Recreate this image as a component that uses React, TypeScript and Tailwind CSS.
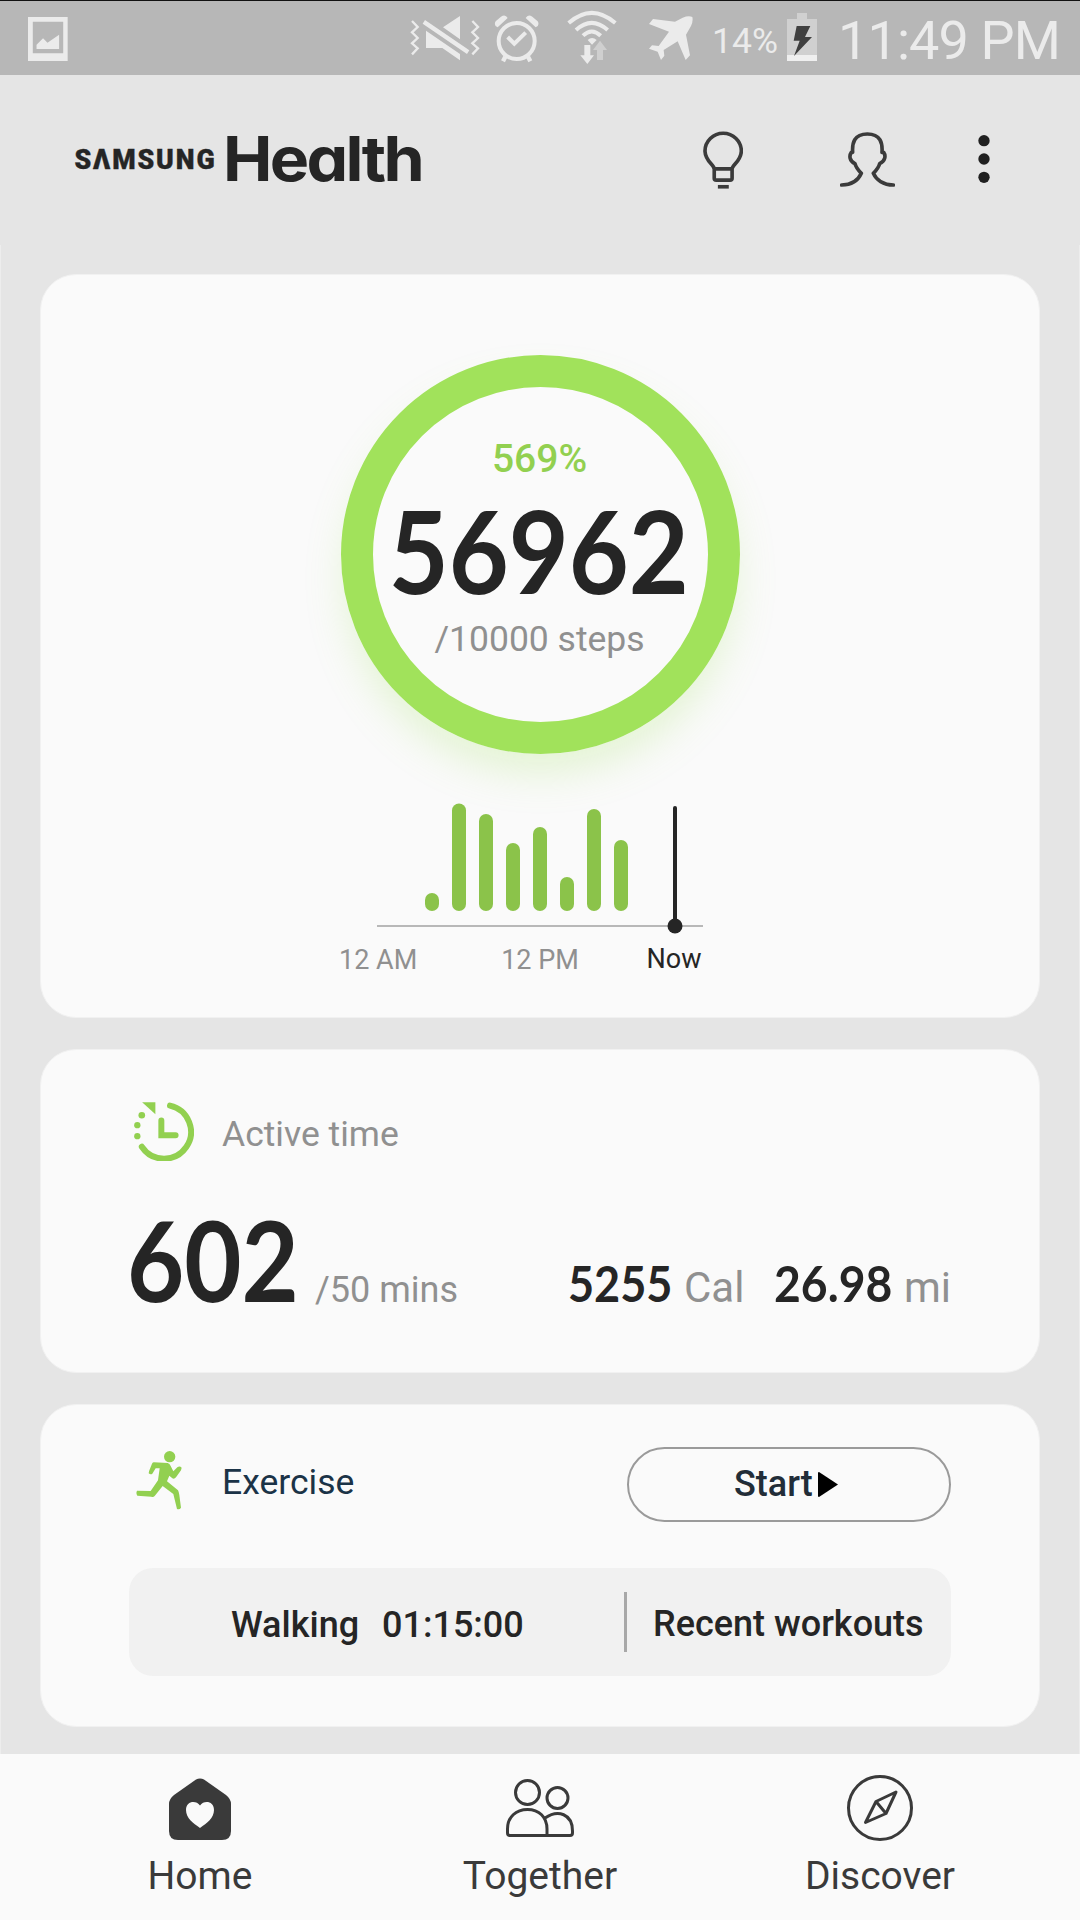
import React from "react";

interface Bar {
  x: number;
  height: number;
}

const bars: Bar[] = [
  { x: 85, height: 18 },
  { x: 112, height: 107.5 },
  { x: 139, height: 97 },
  { x: 166, height: 68 },
  { x: 193, height: 84 },
  { x: 220, height: 34 },
  { x: 247, height: 102 },
  { x: 274, height: 71 },
];

function StatusBar() {
  return (
    <div className="flex h-[75px] border-t border-[#111] bg-[#b7b7b7] text-[#ebebeb]">
      <svg className="-mt-px ml-[28px] h-[75px] w-[40px] shrink-0" viewBox="81 0 117 225" preserveAspectRatio="none" fill="currentColor">
        <path fillRule="evenodd" d="M81 51H197V183H81ZM95 65V160H184V65Z" />
        <path d="M106 134L125 115L138 128L172 104V147H106Z" />
      </svg>
      <svg className="-mt-px ml-[342px] h-[75px] w-[70px] shrink-0" viewBox="30 0 210 225" fill="currentColor">
        <path
          d="M36 63L53 81L36 97L53 114L36 130L53 145L36 163M217 63L234 81L217 97L234 114L217 130L234 145L217 163"
          fill="none"
          stroke="currentColor"
          strokeWidth="7"
        />
        <path d="M180 48V118L129 82ZM78 92L180 162V181L127 144H78ZM75 60L208 151L201 162L68 71Z" />
      </svg>
      <svg className="-mt-px ml-[14px] h-[75px] w-[46px] shrink-0" viewBox="283 0 138 225" fill="none" stroke="currentColor">
        <circle cx="351" cy="123" r="54" strokeWidth="12" />
        <path d="M324 111L344 131L378 98" strokeWidth="12" />
        <path d="M317 170L310 184M385 170L392 184" strokeWidth="13" />
        <path
          d="M294 82Q281 76 288 64L304 50Q317 41 324 54ZM408 82Q421 76 414 64L398 50Q385 41 378 54Z"
          fill="currentColor"
          stroke="none"
        />
      </svg>
      <svg className="-mt-px ml-[27px] h-[75px] w-[50px] shrink-0" viewBox="501 0 150 225" fill="none" stroke="currentColor">
        <path d="M506 69Q575 8 646 69M528 90Q575 47 623 90M549 107Q575 82 602 107" strokeWidth="12" />
        <path d="M563 120Q576 108 590 120L576 134Z" fill="currentColor" stroke="none" />
        <path d="M553 135H571V166H582L562 192L541 166H553Z" fill="currentColor" stroke="none" />
        <path d="M600 122L621 150H609V180H591V150H579Z" fill="#cfcfcf" stroke="none" />
      </svg>
      <svg className="-mt-px ml-[31px] h-[75px] w-[45px] shrink-0" viewBox="744 0 135 225" fill="currentColor">
        <path d="M747 72L759 57L825 65L848 53Q866 46 877 51Q880 63 873 78L858 104L870 166L857 180L833 124L791 150L793 167L783 180L773 155L747 146L756 136L776 138L807 95Z" />
      </svg>
      <span className="ml-[19px] mt-[19px] w-[69px] text-[35.5px] leading-[42px]">14%</span>
      <svg className="-mt-px ml-[6px] h-[75px] w-[30px] shrink-0" viewBox="201 0 90 225">
        <path d="M231 39H261V57H291V166H201V57H231Z" fill="#d0d0d0" />
        <path d="M201 165H291V183H201Z" fill="#efefef" />
        <path d="M230 78H271L255 111H276L222 168L239 122H221Z" fill="#404040" />
      </svg>
      <span className="ml-[21px] mt-[8px] whitespace-nowrap text-[54px] leading-[64px] tracking-[-0.9px]">11:49 PM</span>
    </div>
  );
}

function Header() {
  return (
    <div className="flex h-[170px] pt-[35px]">
      <svg className="ml-[50px] h-[100px] w-[400px] shrink-0" viewBox="0 0 400 100" fill="#252525">
        <text
          x="24.5"
          y="59"
          textLength="142"
          lengthAdjust="spacingAndGlyphs"
          stroke="#252525"
          strokeWidth="0.4"
          className="font-['Roboto'] text-[28.5px] font-black tracking-[2px]"
        >
          SΛMSUNG
        </text>
        <text
          x="173"
          y="71"
          textLength="199"
          lengthAdjust="spacingAndGlyphs"
          className="font-['Inter'] text-[62px] font-bold tracking-[-2.5px] [font-feature-settings:'cv11']"
        >
          Health
        </text>
      </svg>
      <svg className="ml-[253px] h-[100px] w-[40px] shrink-0" viewBox="69 0 121 300" fill="none" stroke="#3b3b3b" strokeWidth="11">
        <path d="M103 175C98 162 76 151 75 123A55 54 0 0 1 185 123C184 151 162 162 157 175" />
        <path d="M103 177H157V205Q157 211 151 211H109Q103 211 103 205Z" />
        <path d="M114 231H147" />
      </svg>
      <svg
        className="ml-[97px] h-[100px] w-[55px] shrink-0"
        viewBox="480 0 165 300"
        fill="none"
        stroke="#3b3b3b"
        strokeWidth="11"
        strokeLinecap="round"
        strokeLinejoin="round"
      >
        <path d="M485 225C515 225 535 210 544 190C535 181 528 174 525 161C508 153 507 137 514 127L518 127C516 100 522 72 562 72C602 72 608 100 606 127L611 127C618 137 616 153 599 161C596 174 589 181 580 190C589 210 610 225 640 225" />
      </svg>
      <svg className="ml-[83px] h-[100px] w-[12px] shrink-0" viewBox="893 0 36 300" fill="#202020">
        <circle cx="911" cy="92" r="17" />
        <circle cx="911" cy="147" r="17" />
        <circle cx="911" cy="202" r="17" />
      </svg>
    </div>
  );
}

function StepsCard() {
  return (
    <div className="flex h-[744px] flex-col items-center rounded-[36px] border border-[#f1f1f1] bg-[#fafafa] pt-[80px]">
      <div className="flex h-[399px] w-[399px] shrink-0 flex-col items-center rounded-full border-[32px] border-[#a1e25b] pr-px pt-[52px] shadow-[0_24px_40px_-6px_rgba(161,226,91,0.25)]">
        <span className="text-[39px] font-medium leading-[40px] text-[#92d050]">569%</span>
        <span className="mt-[10px] -ml-[2px] scale-x-[0.9] whitespace-nowrap font-['Lato'] text-[115px] font-bold leading-[120px] text-[#252525]">
          56962
        </span>
        <span className="mt-[9px] whitespace-nowrap text-[35.5px] leading-[42px] text-[#909090]">/10000 steps</span>
      </div>
      <svg className="mt-[46px] h-[136px] w-[400px] shrink-0" viewBox="0 0 400 136">
        {bars.map((b) => (
          <rect key={b.x} x={b.x} y={111 - b.height} width="14" height={b.height} rx="7" fill="#8bc34a" />
        ))}
        <rect x="37" y="125" width="326" height="2" fill="#b8b8b8" />
        <rect x="333" y="6" width="4" height="120" rx="2" fill="#252525" />
        <circle cx="335" cy="126" r="7.5" fill="#252525" />
      </svg>
      <div className="mt-[8px] flex w-[400px] whitespace-nowrap text-center text-[27px] leading-[32px] text-[#909090]">
        <span className="-ml-px w-[77px]">12 AM</span>
        <span className="ml-[84px] w-[80px]">12 PM</span>
        <span className="-mt-px ml-[64px] w-[60px] text-[#252525]">Now</span>
      </div>
    </div>
  );
}

function ActiveTimeCard() {
  return (
    <div className="h-[324px] rounded-[36px] border border-[#f1f1f1] bg-[#fafafa] pt-[52px] text-[36px] text-[#909090]">
      <div className="flex h-[60px]">
        <svg className="ml-[93px] h-[59px] w-[60px]" viewBox="311 185 180 178" fill="#92d050">
          <path d="M335 186H375V222Z" />
          <circle cx="334" cy="225" r="10" />
          <circle cx="320.5" cy="255" r="9.5" />
          <circle cx="320.5" cy="288" r="9.5" />
          <g fill="none" stroke="#92d050" strokeWidth="18" strokeLinecap="round">
            <path d="M419 196A81 81 0 1 1 334 320" />
            <path d="M393 241V285H436" />
          </g>
        </svg>
        <span className="ml-[28px] mt-[11px] text-[35.5px] leading-[42px]">Active time</span>
      </div>
      <div className="mt-[41px] flex items-baseline whitespace-nowrap leading-[42px]">
        <span className="ml-[86px] w-[188px] origin-left scale-x-[0.89] font-['Lato'] text-[111px] font-bold leading-[112px] text-[#252525]">
          602
        </span>
        <span className="w-[253px]">/50 mins</span>
        <span className="w-[116px] origin-left scale-x-[0.9] font-['Lato'] text-[50px] font-bold text-[#252525]">5255</span>
        <span className="w-[90px] text-[42px]">Cal</span>
        <span className="w-[130px] origin-left scale-x-[0.925] font-['Lato'] text-[50px] font-bold text-[#252525]">26.98</span>
        <span className="text-[42px]">mi</span>
      </div>
    </div>
  );
}

function ExerciseCard() {
  return (
    <div className="h-[323px] rounded-[36px] border border-[#f1f1f1] bg-[#fafafa] pt-[42px] text-[36px] leading-[42px]">
      <div className="flex h-[75px]">
        <svg className="ml-[95px] mt-[4px] h-[59px] w-[46px]" viewBox="317 152 138 177" fill="#92d050">
          <circle cx="418" cy="169" r="17" />
          <path d="M371 186L412 188Q418 190 421 197L429 213L441 201Q448 196 454 202L452 210L437 231Q432 237 426 234L417 226L410 243L443 270Q446 276 447 284L452 322Q448 329 440 326L429 281L397 257L373 287Q369 291 363 289L321 286Q316 279 320 271L361 272L383 240L388 204L376 204L366 220Q361 224 355 219Q355 213 359 205L365 190Q367 186 371 186Z" />
        </svg>
        <span className="ml-[40px] mt-[14px] w-[405px] text-[35.5px] text-[#1b3347]">Exercise</span>
        <button className="flex h-[75px] w-[324px] rounded-full border-2 border-[#9a9a9a] pl-[105px] pt-[14px] font-medium text-[#222d38]">
          Start
          <svg className="ml-[5px] mt-[9px] h-[25px] w-[20px]" viewBox="0 0 20 25">
            <path d="M0 1Q0 0 1 0L20 12.5L1 25Q0 25 0 24Z" fill="#000" />
          </svg>
        </button>
      </div>
      <div className="ml-[88px] mt-[46px] flex h-[108px] w-[822px] items-center whitespace-nowrap rounded-[24px] bg-[#f1f1f1] font-medium text-[#252525]">
        <span className="ml-[102px] mt-[5px] w-[151px]">Walking</span>
        <span className="mt-[5px] w-[242px]">01:15:00</span>
        <div className="h-[60px] w-[3px] bg-[#a8a8a8]" />
        <span className="ml-[26px] mt-[4px]">Recent workouts</span>
      </div>
    </div>
  );
}

function BottomNav() {
  return (
    <div className="flex h-[166px] bg-[#fafafa] px-[30px] pt-[19px] text-[39px] leading-[44px] text-[#3a3a3a]">
      <div className="flex w-[340px] flex-col items-center">
        <svg className="h-[70px] w-[70px]" viewBox="165 1773 70 70" fill="#3a3a3a">
          <path d="M196 1779.5Q200 1777.5 204 1779.5L226 1795Q231 1799 231 1804V1831Q231 1840 222 1840H178Q169 1840 169 1831V1804Q169 1799 174 1795Z" />
          <path
            d="M200 1828C193 1823 186 1818 186 1810C186 1801 196 1800 200 1805.5C204 1800 214 1801 214 1810C214 1818 207 1823 200 1828Z"
            fill="#fafafa"
          />
        </svg>
        <span className="mt-[11px]">Home</span>
      </div>
      <div className="flex w-[340px] flex-col items-center">
        <svg className="h-[70px] w-[70px]" viewBox="505 1773 70 70" fill="none" stroke="#3a3a3a" strokeWidth="3">
          <circle cx="527.5" cy="1792.5" r="12" />
          <circle cx="557.5" cy="1798" r="10.5" />
          <path d="M507.5 1829C507.5 1817 516 1809.5 527.5 1809.5C539 1809.5 547 1817 547 1829V1835.5H510Q507.5 1835.5 507.5 1833Z" />
          <path d="M545 1818C558 1809 572.5 1814 572.5 1831V1833Q572.5 1835.5 570 1835.5H546" />
        </svg>
        <span className="mt-[11px]">Together</span>
      </div>
      <div className="flex w-[340px] flex-col items-center">
        <svg
          className="h-[70px] w-[70px]"
          viewBox="845 1773 70 70"
          fill="none"
          stroke="#3a3a3a"
          strokeWidth="3"
          strokeLinejoin="round"
        >
          <circle cx="880" cy="1808" r="31.5" />
          <path d="M896 1792L876 1801.5L865.5 1822.5L886 1813.5ZM876 1801.5L886 1813.5" />
        </svg>
        <span className="mt-[11px]">Discover</span>
      </div>
    </div>
  );
}

export default function App() {
  return (
    <div className="h-[1920px] w-[1080px] overflow-hidden bg-[#e5e5e5] font-['Roboto',sans-serif]">
      <StatusBar />
      <Header />
      <div className="flex flex-col gap-[31px] border-x border-[#ededed] px-[39px] pb-[27px] pt-[29px]">
        <StepsCard />
        <ActiveTimeCard />
        <ExerciseCard />
      </div>
      <BottomNav />
    </div>
  );
}
